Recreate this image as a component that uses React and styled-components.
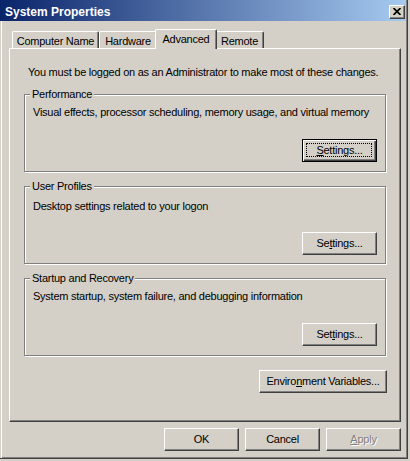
import React from 'react';
import styled, { createGlobalStyle, css } from 'styled-components';

const face = css`
  font-family: "Liberation Sans", Arial, sans-serif;
  font-size: 11px;
  line-height: 13px;
  letter-spacing: -0.25px;
`;

const raised = css`
  border-top: 1px solid #fff;
  border-left: 1px solid #fff;
  border-right: 1px solid #404040;
  border-bottom: 1px solid #404040;
  box-shadow: inset -1px -1px 0 #808080;
`;

const GlobalStyle = createGlobalStyle`
  html, body {
    margin: 0;
    padding: 0;
    background: #d4d0c8;
    width: 410px;
    height: 461px;
    overflow: hidden;
  }
  * { box-sizing: border-box; }
`;

const Window = styled.div`
  ${face};
  width: 408px;
  height: 459px;
  background: #d4d0c8;
  border-right: 1px solid #404040;
  border-bottom: 1px solid #404040;
  box-shadow: inset 1px 0 0 #d4d0c8, inset 2px 0 0 #fff, inset -1px -1px 0 #808080;
  display: flex;
  flex-direction: column;
  color: #000;
  white-space: nowrap;
`;

const TitleBar = styled.div`
  height: 21px;
  margin-right: 1px;
  padding: 0 1px 0 5px;
  display: flex;
  align-items: center;
  justify-content: space-between;
  background: linear-gradient(to right, #0a246a, #a6caf0);
`;

const Title = styled.span`
  color: #fff;
  font-weight: bold;
  font-size: 12px;
  letter-spacing: 0;
  padding-top: 3px;
`;

const CloseButton = styled.div`
  ${raised};
  width: 16px;
  height: 14px;
  margin-top: 2px;
  background: #d4d0c8;
  display: flex;
  align-items: center;
  justify-content: center;
`;

const Body = styled.div`
  padding: 8px 0 0 9px;
  display: flex;
  flex-direction: column;
`;

const TabStrip = styled.div`
  display: flex;
  align-items: flex-end;
  height: 19px;
  padding-left: 3px;
`;

const Tab = styled.div`
  width: ${({ $w }) => $w}px;
  height: 17px;
  padding-top: 2px;
  display: flex;
  align-items: center;
  justify-content: center;
  background: #d4d0c8;
  border-top: 1px solid #fff;
  border-left: 1px solid #fff;
  border-right: 1px solid #404040;
  border-top-left-radius: 2px;
  border-top-right-radius: 2px;
  box-shadow: inset -1px 0 0 #808080;

  ${({ $active }) =>
    $active &&
    css`
      position: relative;
      z-index: 1;
      height: 20px;
      width: ${({ $w }) => $w + 4}px;
      margin: 0 -2px -1px;
      padding-top: 0;
    `}
`;

const Panel = styled.div`
  width: 392px;
  height: 374px;
  background: #d4d0c8;
  ${raised};
  padding: 17px 13px 0 14px;
  display: flex;
  flex-direction: column;
`;

const Notice = styled.div`
  padding-left: 4px;
  margin-bottom: 15px;
`;

const Group = styled.div`
  position: relative;
  height: 78px;
  margin: 0 1px 14px 0;
  padding: ${({ $pt }) => $pt}px 8px 0 8px;
  border: 1px solid #808080;
  box-shadow: 1px 1px 0 #fff, inset 1px 1px 0 #fff;
  display: flex;
  flex-direction: column;
`;

const Legend = styled.span`
  position: absolute;
  top: -7px;
  left: 5px;
  padding: 0 2px;
  background: #d4d0c8;
`;

const ButtonRow = styled.div`
  display: flex;
  justify-content: flex-end;
  gap: 6px;
  margin-top: ${({ $mt }) => $mt || 0}px;
`;

const Button = styled.div`
  ${raised};
  position: relative;
  width: ${({ $w }) => $w || 75}px;
  height: 23px;
  background: #d4d0c8;
  display: flex;
  align-items: center;
  justify-content: center;
  color: ${({ disabled }) => (disabled ? '#808080' : '#000')};
  text-shadow: ${({ disabled }) => (disabled ? '1px 1px 0 #fff' : 'none')};

  ${({ $focused }) =>
    $focused &&
    css`
      border: 1px solid #000;
      box-shadow: inset 1px 1px 0 #fff, inset -1px -1px 0 #404040,
        inset -2px -2px 0 #808080;

      &::after {
        content: '';
        position: absolute;
        inset: 3px 4px 4px 3px;
        border: 1px dotted #000;
      }
    `}
`;

const Key = styled.u`
  text-decoration: underline;
  text-underline-offset: 1px;
`;

const Footer = styled(ButtonRow)`
  margin-top: 6px;
  width: 392px;
`;

const groups = [
  {
    title: 'Performance',
    text: 'Visual effects, processor scheduling, memory usage, and virtual memory',
    label: ['', 'S', 'ettings...'],
    focused: true,
    pt: 11,
    gap: 20,
  },
  {
    title: 'User Profiles',
    text: 'Desktop settings related to your logon',
    label: ['Se', 't', 'tings...'],
    pt: 13,
    gap: 19,
  },
  {
    title: 'Startup and Recovery',
    text: 'System startup, system failure, and debugging information',
    label: ['Set', 't', 'ings...'],
    pt: 11,
    gap: 20,
  },
];

const tabs = [
  { name: 'Computer Name', w: 87 },
  { name: 'Hardware', w: 58 },
  { name: 'Advanced', w: 58, active: true },
  { name: 'Remote', w: 49 },
];

export default function App() {
  return (
    <>
      <GlobalStyle />
      <Window>
        <TitleBar>
          <Title>System Properties</Title>
          <CloseButton>
            <svg width="8" height="7" viewBox="0 0 8 7">
              <path d="M0.5 0 L7.5 7 M7.5 0 L0.5 7" stroke="#000" strokeWidth="1.7" />
            </svg>
          </CloseButton>
        </TitleBar>

        <Body>
          <TabStrip>
            {tabs.map((t) => (
              <Tab key={t.name} $w={t.w} $active={t.active}>
                {t.name}
              </Tab>
            ))}
          </TabStrip>

          <Panel>
            <Notice>You must be logged on as an Administrator to make most of these changes.</Notice>

            {groups.map((g) => (
              <Group key={g.title} $pt={g.pt}>
                <Legend>{g.title}</Legend>
                <div>{g.text}</div>
                <ButtonRow $mt={g.gap}>
                  <Button $focused={g.focused}>
                    {g.label[0]}
                    <Key>{g.label[1]}</Key>
                    {g.label[2]}
                  </Button>
                </ButtonRow>
              </Group>
            ))}

            <ButtonRow>
              <Button $w={128}>
                Enviro<Key>n</Key>ment Variables...
              </Button>
            </ButtonRow>
          </Panel>

          <Footer>
            <Button>OK</Button>
            <Button>Cancel</Button>
            <Button disabled>
              <Key>A</Key>pply
            </Button>
          </Footer>
        </Body>
      </Window>
    </>
  );
}
